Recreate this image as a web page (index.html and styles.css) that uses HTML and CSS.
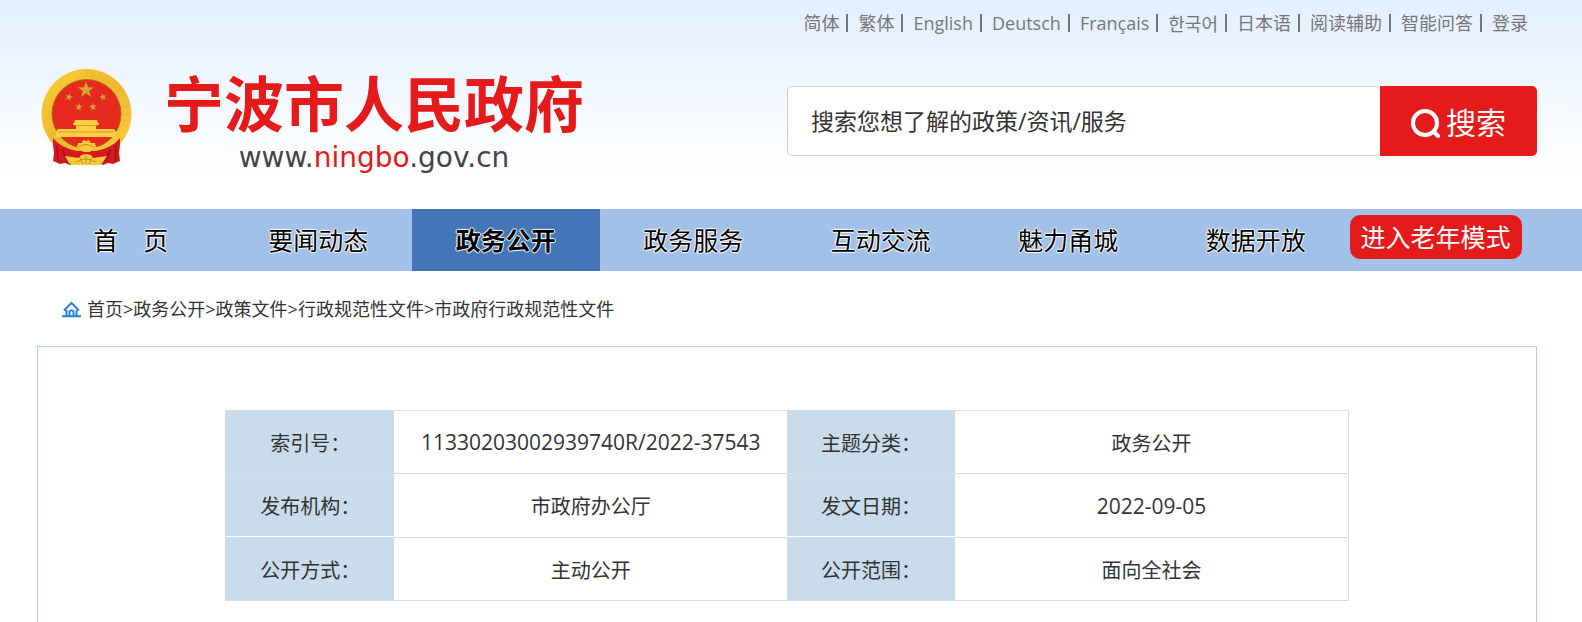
FILE: index.html
```html
<!DOCTYPE html>
<html lang="zh-CN">

<head>
    <meta charset="UTF-8">
    <meta name="viewport" content="width=device-width, initial-scale=1.0">
    <title>宁波市人民政府</title>
    <link rel="stylesheet" href="styles.css">
</head>

<body>
    <header class="header">
        <div class="wrap">
            <div class="top-links">
                <a href="#">简体</a>
                <a href="#">繁体</a>
                <a href="#">English</a>
                <a href="#">Deutsch</a>
                <a href="#">Français</a>
                <a href="#" class="korean" lang="ko">한국어</a>
                <a href="#" lang="ja">日本语</a>
                <a href="#">阅读辅助</a>
                <a href="#">智能问答</a>
                <a href="#">登录</a>
            </div>
            <div class="brand">
                <a href="#" class="logo">
                    <svg class="emblem" viewBox="0 0 91 97" aria-hidden="true">
                        <defs>
                            <linearGradient id="gold" x1="0" y1="0" x2="1" y2="1">
                                <stop offset="0" stop-color="#f9cf3c"/>
                                <stop offset="0.5" stop-color="#eeb82c"/>
                                <stop offset="1" stop-color="#fbd044"/>
                            </linearGradient>
                            <path id="star" d="M0-10 2.4-3.2 9.5-3.1 3.8 1.2 5.9 8.1 0 4-5.9 8.1-3.8 1.2-9.5-3.1-2.4-3.2Z"/>
                        </defs>
                        <circle cx="45.5" cy="45" r="45" fill="url(#gold)"/>
                        <circle cx="45.5" cy="45" r="39.5" fill="none" stroke="#d99a20" stroke-width="8" stroke-dasharray="1 5" opacity="0.15"/>
                        <circle cx="45.5" cy="45" r="34.5" fill="#e62a20" stroke="#a86a18" stroke-width="1"/>
                        <g fill="#dfa42d" stroke="#a8561a" stroke-width="0.6">
                            <use href="#star" transform="translate(45 21) scale(0.9)"/>
                            <use href="#star" transform="translate(28 28) rotate(15) scale(0.42)"/>
                            <use href="#star" transform="translate(62 28) rotate(-15) scale(0.42)"/>
                            <use href="#star" transform="translate(38 38) rotate(10) scale(0.42)"/>
                            <use href="#star" transform="translate(52 38) rotate(-10) scale(0.42)"/>
                        </g>
                        <path fill="#f9cf45" d="M34 51h22l1 3h1v2h-3v4h18l2 3v5H15v-5l2-3h18v-4h-3v-2h1z"/>
                        <path d="M34 56.500h22M17 63h56" stroke="#d99a28" stroke-width="1"/>
                        <path fill="#d41a1c" d="M12 69q8 10 24 13v10l-7 4-5-2-5 1-7-3 1-8-1-8zM79 69q-8 10-24 13v10l7 4 5-2 5 1 7-3-1-8 1-8z"/>
                        <path d="M16 77l1 16M21 80l6 13M75 77l-1 16M70 80l-6 13" stroke="#96101a" stroke-width="1.200" fill="none"/>
                        <path fill="#d41a1c" d="M30 82h31v10H30z"/>
                        <path fill="#f7c93e" d="M31 80l5-2 1-4 4 0 1-3 3 1 3-1 2 3 4 0 1 4 5 2-9 0-2 3h-7l-2-3zM24 87l14 2 2-3 5-1 5 1 2 3 14-2-4 6-3 3H31l-3-2z"/>
                        <path fill="none" stroke="#cf8f22" stroke-width="1" d="M36 79q9-7 18 0M35 93q10-6 20 0M45 87v8M39 89l3 6M51 89l-3 6"/>
                    </svg>
                    <span class="site-name">
                        <span class="name">宁波市人民政府</span>
                        <span class="domain">www.<span class="domain-red">ningbo</span>.gov.cn</span>
                    </span>
                </a>
                <form class="search">
                    <input type="text" class="search-input" aria-label="搜索" placeholder="搜索您想了解的政策/资讯/服务">
                    <button type="button" class="search-btn">
                        <svg class="search-icon" viewBox="0 0 30 30" aria-hidden="true">
                            <circle cx="14" cy="15" r="12"/>
                            <path d="M23 24l4 4"/>
                        </svg>
                        搜索
                    </button>
                </form>
            </div>
        </div>
    </header>

    <nav class="nav">
        <div class="wrap nav-list">
            <a href="#">首　页</a>
            <a href="#">要闻动态</a>
            <a href="#" class="active">政务公开</a>
            <a href="#">政务服务</a>
            <a href="#">互动交流</a>
            <a href="#">魅力甬城</a>
            <a href="#">数据开放</a>
            <div class="nav-last">
                <button type="button" class="elder-btn">进入老年模式</button>
            </div>
        </div>
    </nav>

    <div class="wrap crumbs">
        <svg class="home-icon" viewBox="0 0 19 17" aria-hidden="true">
            <path d="M2 9.500L9.500 2 17 9.500M4.500 9v6M14.500 9v6M0 15.200h19"/>
            <path d="M7.500 15v-4.500q2-2.500 4 0V15"/>
        </svg>
        <a href="#">首页</a>&gt;<a href="#">政务公开</a>&gt;<a href="#">政策文件</a>&gt;<a href="#">行政规范性文件</a>&gt;<a href="#">市政府行政规范性文件</a>
    </div>

    <main class="wrap content">
        <table class="info">
            <tr>
                <th scope="row">索引号：</th>
                <td class="num">11330203002939740R/2022-37543</td>
                <th scope="row">主题分类：</th>
                <td>政务公开</td>
            </tr>
            <tr>
                <th scope="row">发布机构：</th>
                <td>市政府办公厅</td>
                <th scope="row">发文日期：</th>
                <td class="num">2022-09-05</td>
            </tr>
            <tr>
                <th scope="row">公开方式：</th>
                <td>主动公开</td>
                <th scope="row">公开范围：</th>
                <td>面向全社会</td>
            </tr>
        </table>
    </main>
</body>

</html>
```

FILE: styles.css
```css
* {
    box-sizing: border-box;
}
body {
    margin: 0;
    min-height: 100vh;
    display: flex;
    flex-direction: column;
    background: #fff;
    color: #333;
    font-family: "Open Sans", "Noto Sans CJK SC", sans-serif;
    font-size: 18px;
}
a { color: inherit; text-decoration: none; }
button, input { font-family: inherit; }
.wrap {
    margin: 0 45px 0 37px;
}

/* header */
.header {
    background: linear-gradient(#e3f0ff 0, #e9f1fe 40px, #eef5ff 64px, #fff 180px);
    padding-bottom: 34px;
}
.top-links {
    display: flex;
    justify-content: flex-end;
    padding: 14px 9px 0 0;
    line-height: 18px;
    color: #777;
}
.top-links a + a {
    border-left: 2px solid #777;
    margin-left: 7px;
    padding-left: 10px;
}
.korean { font-family: "Noto Sans CJK KR", sans-serif; }
.brand {
    display: flex;
    justify-content: space-between;
    padding-top: 37px;
}
.logo {
    display: flex;
    padding-left: 4px;
}
.emblem {
    width: 91px;
    height: 97px;
    flex: none;
}
.site-name {
    display: flex;
    flex-direction: column;
    align-items: center;
    padding: 4px 0 0 32px;
}
.name {
    color: #e51a1a;
    font-family: "Liberation Sans", "Noto Sans CJK SC", sans-serif;
    font-size: 60px;
    font-weight: 700;
    line-height: 68px;
}
.domain {
    font-family: "DejaVu Sans", sans-serif;
    font-size: 28px;
    line-height: 34px;
    color: #444;
}
.domain-red { color: #e51a1a; }
.search {
    display: flex;
    width: 50%;
    height: 70px;
    margin: 17px 0 0;
}
.search-input {
    flex: 1;
    min-width: 0;
    border: 1px solid #ccc;
    border-right: 0;
    border-radius: 5px;
    padding: 0 23px;
    font-size: 23px;
    color: #333;
    background: #fff;
}
.search-input::placeholder { color: #333; opacity: 1; }
.search-btn {
    display: flex;
    align-items: center;
    justify-content: center;
    gap: 5px;
    width: 157px;
    border: 0;
    border-radius: 0 5px 5px 0;
    background: #e51a1a;
    color: #fff;
    font-size: 30px;
}
.search-icon {
    width: 30px;
    height: 30px;
    margin-top: 4px;
    fill: none;
    stroke: #fff;
    stroke-width: 4;
    stroke-linecap: round;
}

/* nav */
.nav { background: #a2c1e9; }
.nav-list { display: flex; }
.nav-list a {
    flex: 1;
    line-height: 62px;
    text-align: center;
    font-size: 25px;
    color: #000;
    text-shadow: 1px 0 1px #fff, -1px 0 1px #fff, 0 1px 1px #fff, 0 -1px 1px #fff;
}
.nav-list .active {
    background: #4275b5;
    font-weight: 700;
}
.nav-last {
    flex: 1;
    padding-top: 6px;
}
.elder-btn {
    width: 172px;
    height: 44px;
    padding: 0;
    border: 0;
    border-radius: 10px;
    background: #e51a1a;
    color: #fff;
    font-size: 25px;
    line-height: 44px;
}

/* breadcrumb */
.crumbs {
    display: flex;
    align-items: center;
    padding: 24px 25px 0;
    line-height: 28px;
}
.home-icon {
    width: 19px;
    height: 17px;
    margin-right: 6px;
    fill: none;
    stroke: #2a7fd0;
    stroke-width: 2;
}

/* document info */
.content {
    flex: 1;
    margin-top: 23px;
    padding-top: 63px;
    border: 1px solid #b4cbea;
    border-bottom: 0;
}
.info {
    width: 75%;
    margin: 0 auto;
    table-layout: fixed;
    border-spacing: 0;
    border: 1px solid #ddd;
    border-top: 0;
    font-size: 20px;
    text-align: center;
}
.info th, .info td {
    height: 63px;
    padding: 0;
    border-top: 1px solid #ddd;
    font-weight: 400;
}
.info th {
    width: 15%;
    background: #c8dcec;
}
.info .num { font-size: 21px; }
.info tr:nth-child(2) th { border-bottom: 1px solid #fff; }
.info tr:nth-child(2) td { height: 64px; }
```
